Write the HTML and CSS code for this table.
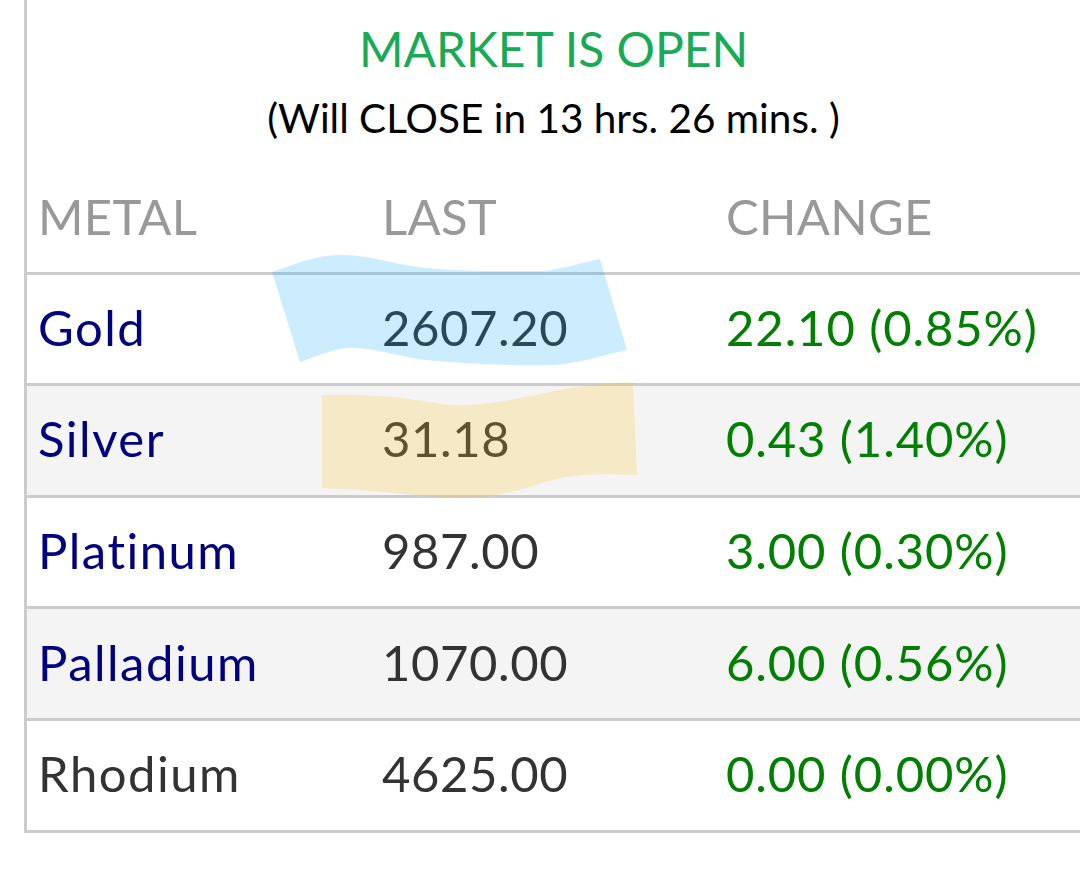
FILE: index.html
```html
<!DOCTYPE html>
<html>
<head>
<meta charset="utf-8">
<link rel="stylesheet" href="styles.css">
</head>
<body>
<div class="board">
  <div class="status">
    <div class="title">MARKET IS OPEN</div>
    <div class="subtitle">(Will CLOSE in 13 hrs. 26 mins. )</div>
  </div>
  <div class="grid">
    <div class="row head">
      <div class="cell">METAL</div>
      <div class="cell">LAST</div>
      <div class="cell">CHANGE</div>
    </div>
    <div class="row">
      <div class="cell name link">Gold</div>
      <div class="cell last">2607.20</div>
      <div class="cell chg">22.10 (0.85%)</div>
    </div>
    <div class="row alt">
      <div class="cell name link">Silver</div>
      <div class="cell last">31.18</div>
      <div class="cell chg">0.43 (1.40%)</div>
    </div>
    <div class="row">
      <div class="cell name link">Platinum</div>
      <div class="cell last">987.00</div>
      <div class="cell chg">3.00 (0.30%)</div>
    </div>
    <div class="row alt">
      <div class="cell name link">Palladium</div>
      <div class="cell last">1070.00</div>
      <div class="cell chg">6.00 (0.56%)</div>
    </div>
    <div class="row">
      <div class="cell name">Rhodium</div>
      <div class="cell last">4625.00</div>
      <div class="cell chg">0.00 (0.00%)</div>
    </div>
  </div>
  <svg class="marks" width="1080" height="882" viewBox="0 0 1080 882">
    <path class="mark-blue" d="M272 272 C300 262 320 254 345 255 C375 256 395 265 425 268 C465 272 505 271 545 271 C565 268 585 262 600 259 L627 350 C600 356 585 362 555 365 C510 366 470 364 425 360 C395 356 370 346 345 348 C325 352 312 358 300 362 Z"/>
    <path class="mark-yellow" d="M322 395 C360 394 400 396 440 404 C470 408 500 402 540 394 C575 386 605 383 633 382 L637 475 C610 474 585 473 560 478 C530 486 500 498 465 498 C420 497 380 490 322 488 Z"/>
  </svg>
</div>
</body>
</html>
```
FILE: styles.css
```css
html, body {
  margin: 0;
  padding: 0;
  background: #ffffff;
}

body {
  width: 1080px;
  height: 882px;
  overflow: hidden;
  font-family: "Lato", "Open Sans", sans-serif;
}

.board {
  position: relative;
  margin-left: 24px;
  border-left: 3px solid #cccccc;
  width: 1100px;
}

.status {
  display: flex;
  flex-direction: column;
  align-items: center;
  width: 1053px;
  padding-top: 20px;
}

.title {
  font-size: 48px;
  line-height: 58px;
  color: #19aa55;
}

.subtitle {
  margin-top: 16px;
  font-size: 40.5px;
  line-height: 47px;
  color: #000000;
}

.grid {
  display: flex;
  flex-direction: column;
}

.row {
  display: grid;
  grid-template-columns: 344px 344px 1fr;
  align-items: center;
  height: 108.6px;
  border-bottom: 3px solid #cccccc;
  font-size: 49px;
  line-height: 59px;
}

.row.head {
  height: 130.6px;
  align-items: end;
}

.row.head .cell {
  color: #999999;
  padding-bottom: 26px;
  letter-spacing: 0.3px;
}

.row.alt {
  background: #f4f4f4;
}

.cell {
  padding-left: 11px;
  color: #333333;
  white-space: nowrap;
  margin-top: -3px;
}

.cell.name {
  letter-spacing: 1.5px;
}

.cell.last {
  letter-spacing: 0.6px;
}

.cell.chg {
  color: #008000;
  letter-spacing: 0.9px;
}

.cell.link {
  color: #000080;
}

.marks {
  position: absolute;
  left: -27px;
  top: 0;
  pointer-events: none;
}

.mark-blue {
  fill: rgba(0, 165, 245, 0.2);
}

.mark-yellow {
  fill: rgba(253, 198, 30, 0.22);
}
```
